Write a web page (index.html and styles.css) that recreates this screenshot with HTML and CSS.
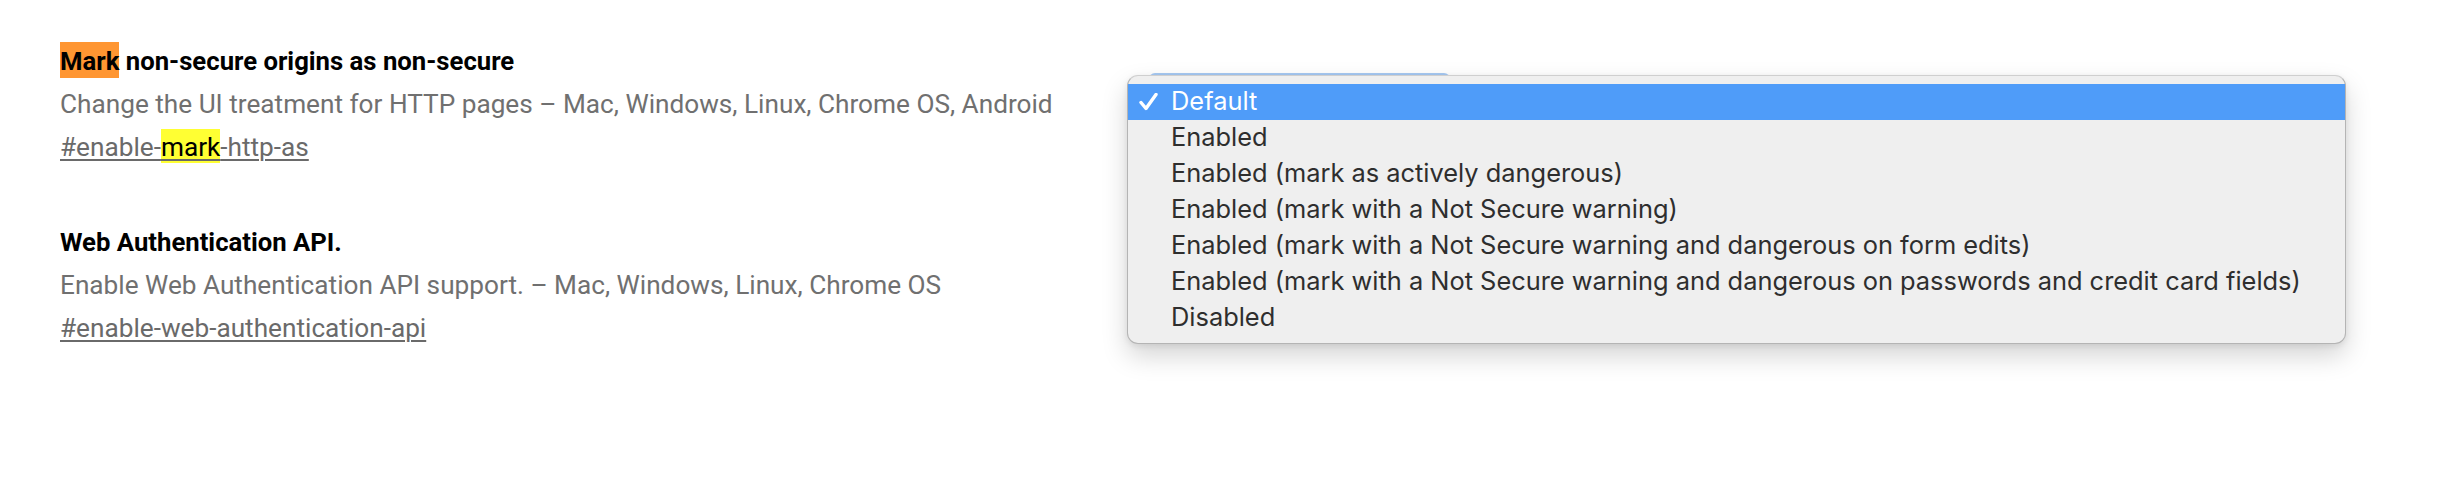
FILE: index.html
```html
<!DOCTYPE html>
<html lang="en">
<head>
<meta charset="utf-8">
<title>Experiments</title>
<link rel="stylesheet" href="styles.css">
</head>
<body>
<div class="experiments">
  <div class="experiment">
    <div class="info">
      <h3 class="name"><span class="hl-current">Mark</span> non-secure origins as non-secure</h3>
      <p class="desc">Change the UI treatment for HTTP pages – Mac, Windows, Linux, Chrome OS, Android</p>
      <p class="perma"><a href="#">#enable-<span class="hl">mark</span>-http-as</a></p>
    </div>
    <div class="control">
      <div class="select" aria-label="Default"></div>
      <ul class="menu">
        <li class="item selected">
          <svg class="check" width="19" height="18" viewBox="0 0 19 18" aria-hidden="true">
            <path d="M2 9.5 L7 15.5 L17 1.5" fill="none" stroke="#ffffff" stroke-width="3.4" stroke-linecap="round" stroke-linejoin="round"/>
          </svg>Default</li>
        <li class="item">Enabled</li>
        <li class="item">Enabled (mark as actively dangerous)</li>
        <li class="item">Enabled (mark with a Not Secure warning)</li>
        <li class="item">Enabled (mark with a Not Secure warning and dangerous on form edits)</li>
        <li class="item">Enabled (mark with a Not Secure warning and dangerous on passwords and credit card fields)</li>
        <li class="item">Disabled</li>
      </ul>
    </div>
  </div>
  <div class="experiment">
    <div class="info">
      <h3 class="name">Web Authentication API.</h3>
      <p class="desc">Enable Web Authentication API support. – Mac, Windows, Linux, Chrome OS</p>
      <p class="perma"><a href="#">#enable-web-authentication-api</a></p>
    </div>
    <div class="control"></div>
  </div>
</div>
</body>
</html>
```

FILE: styles.css
```css
html, body {
  margin: 0;
  padding: 0;
  background: #ffffff;
}

body {
  font-family: Roboto, "Liberation Sans", sans-serif;
}

.experiments {
  padding: 43px 0 0 60px;
}

.experiment {
  display: grid;
  grid-template-columns: 1089px 1fr;
  margin-bottom: 59px;
}

.info {
  display: flex;
  flex-direction: column;
  gap: 7px;
}

.name {
  margin: 0;
  font-size: 25.7px;
  line-height: 36px;
  font-weight: 700;
  color: #000000;
}

.desc {
  margin: 0;
  font-size: 26.2px;
  line-height: 36px;
  color: #707070;
}

.perma {
  margin: 0;
  font-size: 26.2px;
  line-height: 36px;
}

.perma a {
  color: #6a6a6a;
  text-decoration: underline;
  text-decoration-color: #6a6a6a;
  text-underline-offset: 3px;
  text-decoration-thickness: 2px;
}

.hl-current {
  background: #ff9632;
  padding: 4px 0 2px;
}

.hl {
  background: #ffff33;
  color: #000000;
  padding: 3px 0 1px;
}

.control {
  position: relative;
}

.select {
  margin-top: 30px;
  width: 301px;
  height: 40px;
  border-radius: 6px;
  background: linear-gradient(#a9cbf3, #5aa0f5);
}

.menu {
  position: absolute;
  left: -22px;
  top: 32px;
  width: 1219px;
  margin: 0;
  padding: 8px 0 7px;
  list-style: none;
  background: #efefef;
  border: 1px solid #b4b4b4;
  border-top-color: #cfcfcf;
  border-radius: 11px;
  box-sizing: border-box;
  box-shadow: 0 12px 26px rgba(0, 0, 0, 0.17), 0 2px 6px rgba(0, 0, 0, 0.08);
  font-family: Inter, "Noto Sans", sans-serif;
  font-size: 25.4px;
  color: #2e2e2e;
}

.item {
  position: relative;
  height: 36px;
  line-height: 34px;
  padding-left: 43px;
  white-space: nowrap;
}

.item.selected {
  background: #4f9cf9;
  color: #ffffff;
}

.check {
  position: absolute;
  left: 11px;
  top: 9px;
}
```
